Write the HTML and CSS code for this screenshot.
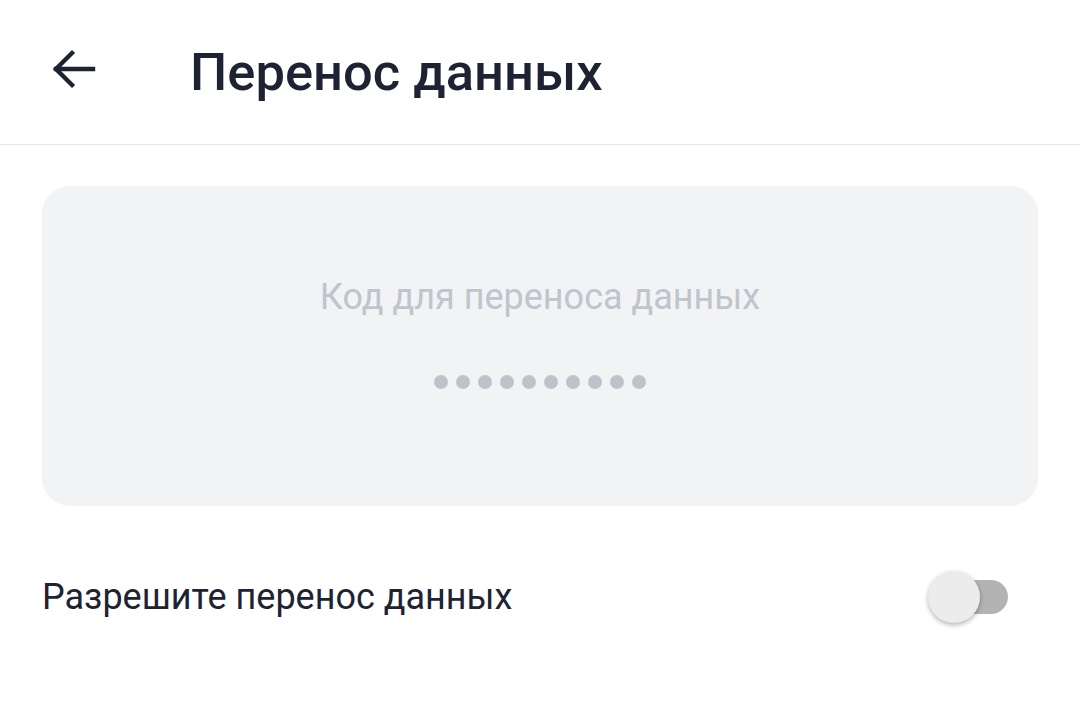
FILE: index.html
```html
<!DOCTYPE html>
<html lang="ru">
<head>
  <meta charset="UTF-8" />
  <meta name="viewport" content="width=device-width, initial-scale=1" />
  <title>Перенос данных</title>
  <link rel="stylesheet" href="styles.css">
</head>
<body>
  <header class="topbar">
    <button class="back" aria-label="Назад">
      <svg width="44" height="40" viewBox="0 0 44 40" fill="none" stroke="currentColor" stroke-width="4.4" stroke-linecap="square">
        <path d="M4 20H41" />
        <path d="M20 4L4 20L20 36" stroke-linejoin="miter" />
      </svg>
    </button>
    <h1 class="title">Перенос данных</h1>
  </header>

  <main class="content">
    <div class="code-card">
      <div class="code-label">Код для переноса данных</div>
      <div class="dots">
        <span></span><span></span><span></span><span></span><span></span>
        <span></span><span></span><span></span><span></span><span></span>
      </div>
    </div>

    <div class="setting">
      <span class="setting-text">Разрешите перенос данных</span>
      <div class="switch"><div class="thumb"></div></div>
    </div>
  </main>
</body>
</html>
```

FILE: styles.css
```css
:root {
  --text: #1e2333;
  --card: #f2f3f5;
  --muted: #c0c4cc;
  --dot: #bfc2ca;
}

body {
  margin: 0;
  font-family: Roboto, "Noto Sans", sans-serif;
  background: #ffffff;
  color: var(--text);
}

.topbar {
  display: flex;
  align-items: center;
  height: 144px;
  border-bottom: 1px solid #e6e7ea;
  box-shadow: 0 1px 2px rgba(0,0,0,0.04);
}

.back {
  display: flex;
  align-items: center;
  background: none;
  border: none;
  padding: 0;
  margin-left: 52px;
  width: 44px;
  color: var(--text);
  margin-top: -6px;
}

.title {
  margin: 0 0 0 94px;
  font-size: 52.5px;
  font-weight: 500;
}

.content {
  padding: 41px 42px 60px 42px;
}

.code-card {
  background: var(--card);
  border-radius: 28px;
  height: 320px;
  display: flex;
  flex-direction: column;
  align-items: center;
  padding-top: 90px;
  box-sizing: border-box;
}

.code-label {
  font-size: 36px;
  color: var(--muted);
  line-height: 42px;
}

.dots {
  display: flex;
  gap: 8px;
  margin-top: 57px;
}

.dots span {
  width: 14px;
  height: 14px;
  border-radius: 50%;
  background: var(--dot);
}

.setting {
  display: flex;
  align-items: center;
  justify-content: space-between;
  margin-top: 70px;
  padding-right: 30px;
}

.setting-text {
  font-size: 36px;
}

.switch {
  position: relative;
  width: 58px;
  height: 34px;
  border-radius: 17px;
  background: #b3b3b3;
}

.thumb {
  position: absolute;
  left: -22px;
  top: -9px;
  width: 52px;
  height: 52px;
  border-radius: 50%;
  background: #ececec;
  box-shadow: 0 2px 5px rgba(0,0,0,0.3);
}
```
